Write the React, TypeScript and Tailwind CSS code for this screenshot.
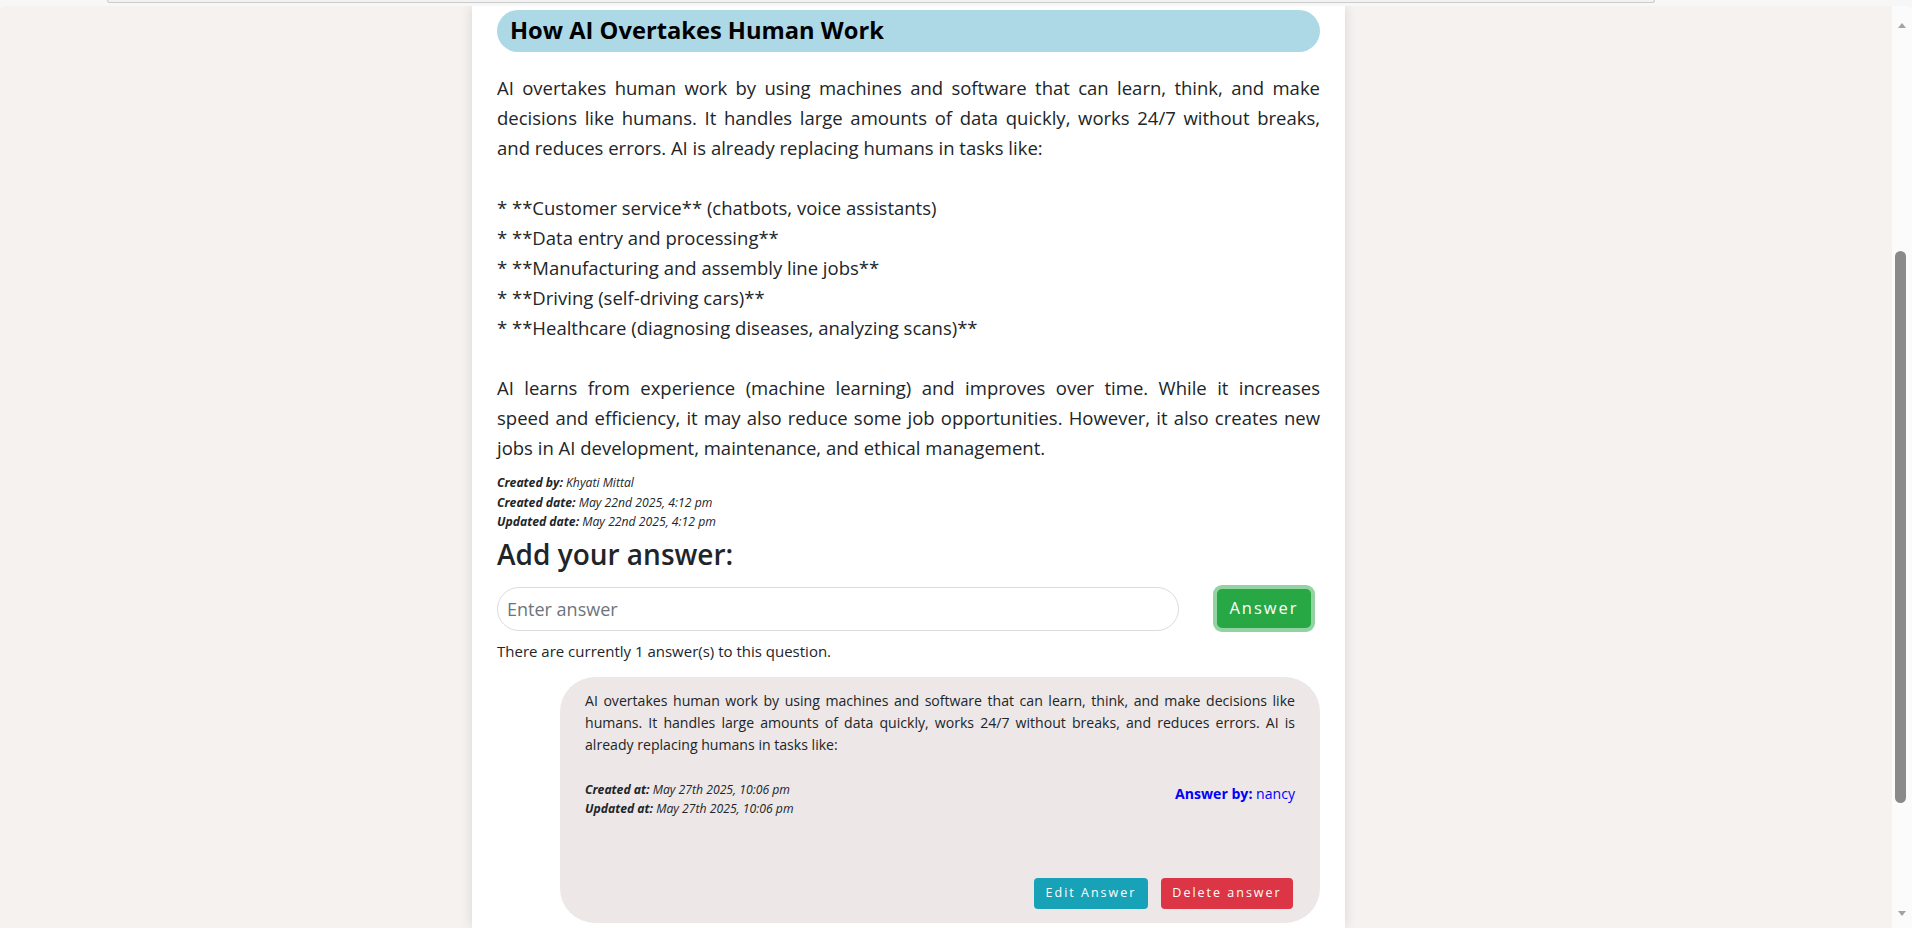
const para1 = [
  "AI overtakes human work by using machines and software that can learn, think, and make",
  "decisions like humans. It handles large amounts of data quickly, works 24/7 without breaks,",
];
const para1Last = "and reduces errors. AI is already replacing humans in tasks like:";
const list = [
  "* **Customer service** (chatbots, voice assistants)",
  "* **Data entry and processing**",
  "* **Manufacturing and assembly line jobs**",
  "* **Driving (self-driving cars)**",
  "* **Healthcare (diagnosing diseases, analyzing scans)**",
];
const para2 = [
  "AI learns from experience (machine learning) and improves over time. While it increases",
  "speed and efficiency, it may also reduce some job opportunities. However, it also creates new",
];
const para2Last = "jobs in AI development, maintenance, and ethical management.";

const answerText =
  "AI overtakes human work by using machines and software that can learn, think, and make decisions like humans. It handles large amounts of data quickly, works 24/7 without breaks, and reduces errors. AI is already replacing humans in tasks like:";

function Meta({ label, value }: { label: string; value: string }) {
  return (
    <div className="italic">
      <span className="font-bold">{label}</span> {value}
    </div>
  );
}

function JLine({ text }: { text: string }) {
  return <span className="block text-justify [text-align-last:justify]">{text}</span>;
}

function Scrollbar() {
  return (
    <div className="w-[20px] flex flex-col items-start bg-[#fbfbfb] rounded-tr-[6px]">
      <div className="w-[17px] ml-[1px] flex justify-center pt-[17px]">
        <div className="w-0 h-0 border-l-[4px] border-r-[4px] border-b-[5px] border-l-transparent border-r-transparent border-b-[#a3a3a3]" />
      </div>
      <div className="mt-[223px] ml-[3px] w-[11px] h-[552px] rounded-full bg-[#8a8a8a]" />
      <div className="flex-1" />
      <div className="w-[17px] ml-[1px] flex justify-center pb-[12px]">
        <div className="w-0 h-0 border-l-[4px] border-r-[4px] border-t-[5px] border-l-transparent border-r-transparent border-t-[#a3a3a3]" />
      </div>
    </div>
  );
}

export default function App() {
  return (
    <div className="w-full h-[928px] overflow-hidden bg-[#f7f7f7] flex flex-col font-['Open_Sans',sans-serif] text-[#212529]">
      <div className="h-[6px] shrink-0">
        <div className="ml-[107px] w-[1548px] h-[3px] border-x border-b border-[#cccccc] rounded-b-[4px] bg-[#f2f2f2]" />
      </div>
      <div className="flex-1 flex min-h-0">
        <div className="flex-1 bg-[#f6f2ef] rounded-tl-[6px] overflow-hidden">
          <div className="ml-[472px] w-[873px] h-full bg-white shadow-[0_0_12px_rgba(0,0,0,0.12)] px-[25px] pt-[4px]">
            <div className="h-[42px] rounded-full bg-[#add8e6] pl-[13px] flex items-center">
              <h2 className="text-[23.7px] font-bold text-black leading-none">How AI Overtakes Human Work</h2>
            </div>
            <div className="mt-[21px] text-[18.5px] leading-[30px]">
              <p>
                {para1.map((l) => (
                  <JLine key={l} text={l} />
                ))}
                <span className="block">{para1Last}</span>
              </p>
              <ul className="mt-[30px]">
                {list.map((l) => (
                  <li key={l}>{l}</li>
                ))}
              </ul>
              <p className="mt-[30px]">
                {para2.map((l) => (
                  <JLine key={l} text={l} />
                ))}
                <span className="block">{para2Last}</span>
              </p>
            </div>
            <div className="mt-[10px] text-[12.2px] leading-[19.5px]">
              <Meta label="Created by:" value="Khyati Mittal" />
              <Meta label="Created date:" value="May 22nd 2025, 4:12 pm" />
              <Meta label="Updated date:" value="May 22nd 2025, 4:12 pm" />
            </div>
            <h3 className="mt-[5px] text-[28px] leading-[34px] font-semibold">Add your answer:</h3>
            <div className="mt-[16px] flex items-center">
              <input
                className="w-[682px] h-[44px] rounded-full border border-[#dcdcdc] pl-[9px] text-[18px] outline-none placeholder:text-[#6c757d]"
                placeholder="Enter answer"
              />
              <button className="ml-[38px] w-[94px] h-[39px] rounded-[5px] bg-[#28a745] text-white text-[16.5px] tracking-[2px] ring-4 ring-[#93d3a2] flex items-center justify-center">
                Answer
              </button>
            </div>
            <p className="mt-[9px] text-[15px] leading-[22px]">There are currently 1 answer(s) to this question.</p>
            <div className="mt-[15px] ml-auto w-[760px] h-[246px] rounded-[35px] bg-[#ede7e7] px-[25px] pt-[13px] pb-[14px] flex flex-col">
              <p className="text-[14.1px] leading-[22px] text-justify">{answerText}</p>
              <div className="mt-[24px] flex justify-between items-start">
                <div className="text-[12.2px] leading-[19.5px]">
                  <Meta label="Created at:" value="May 27th 2025, 10:06 pm" />
                  <Meta label="Updated at:" value="May 27th 2025, 10:06 pm" />
                </div>
                <div className="mt-[3px] text-[14.1px] leading-[22px] text-[#0000ff]">
                  <span className="font-bold">Answer by:</span> nancy
                </div>
              </div>
              <div className="mt-auto flex justify-end gap-[13px] pr-[2px]">
                <button className="w-[114px] h-[31px] rounded-[4px] bg-[#17a2b8] text-white text-[12.5px] tracking-[2px]">
                  Edit Answer
                </button>
                <button className="w-[132px] h-[31px] rounded-[4px] bg-[#dc3545] text-white text-[12.5px] tracking-[2px]">
                  Delete answer
                </button>
              </div>
            </div>
          </div>
        </div>
        <Scrollbar />
      </div>
    </div>
  );
}
